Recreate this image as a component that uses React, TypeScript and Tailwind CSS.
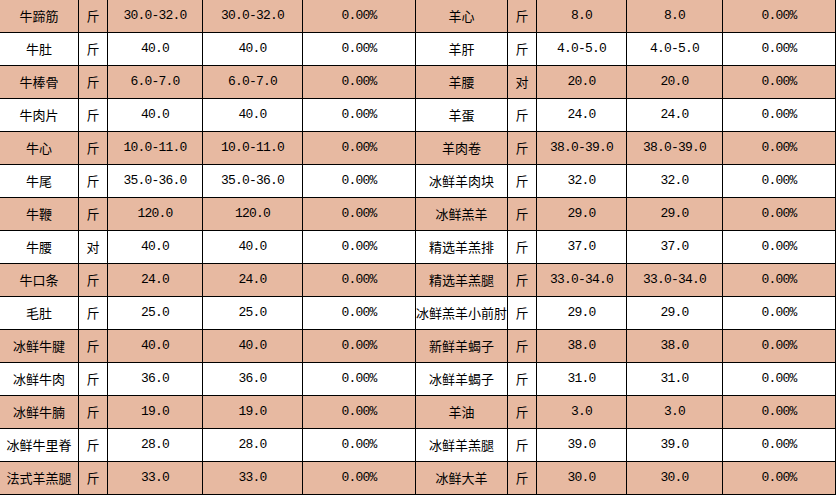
import React from "react";

type Row = [string, string, string];

const left: Row[] = [
  ["牛蹄筋", "斤", "30.0-32.0"],
  ["牛肚", "斤", "40.0"],
  ["牛棒骨", "斤", "6.0-7.0"],
  ["牛肉片", "斤", "40.0"],
  ["牛心", "斤", "10.0-11.0"],
  ["牛尾", "斤", "35.0-36.0"],
  ["牛鞭", "斤", "120.0"],
  ["牛腰", "对", "40.0"],
  ["牛口条", "斤", "24.0"],
  ["毛肚", "斤", "25.0"],
  ["冰鲜牛腱", "斤", "40.0"],
  ["冰鲜牛肉", "斤", "36.0"],
  ["冰鲜牛腩", "斤", "19.0"],
  ["冰鲜牛里脊", "斤", "28.0"],
  ["法式羊羔腿", "斤", "33.0"],
];

const right: Row[] = [
  ["羊心", "斤", "8.0"],
  ["羊肝", "斤", "4.0-5.0"],
  ["羊腰", "对", "20.0"],
  ["羊蛋", "斤", "24.0"],
  ["羊肉卷", "斤", "38.0-39.0"],
  ["冰鲜羊肉块", "斤", "32.0"],
  ["冰鲜羔羊", "斤", "29.0"],
  ["精选羊羔排", "斤", "37.0"],
  ["精选羊羔腿", "斤", "33.0-34.0"],
  ["冰鲜羔羊小前肘", "斤", "29.0"],
  ["新鲜羊蝎子", "斤", "38.0"],
  ["冰鲜羊蝎子", "斤", "31.0"],
  ["羊油", "斤", "3.0"],
  ["冰鲜羊羔腿", "斤", "39.0"],
  ["冰鲜大羊", "斤", "30.0"],
];

const cjk = "font-['Noto_Sans_CJK_SC',sans-serif] text-[13px]";
const mono = "font-['Liberation_Mono',monospace] text-[13px] tracking-[-0.8px]";
const cell =
  "h-[33px] border-r border-b border-black flex items-center justify-center whitespace-nowrap text-black";

export default function App() {
  return (
    <div className="w-[836px] h-[496px] bg-white overflow-hidden">
      <div className="grid grid-cols-[79px_29px_95px_100px_113px_92px_29px_90px_96px_113px]">
        {left.map((l, i) => {
          const r = right[i];
          const bg = i % 2 === 0 ? "bg-[#e7b9a1]" : "bg-white";
          return (
            <React.Fragment key={i}>
              <div className={`${cell} ${bg} ${cjk}`}>{l[0]}</div>
              <div className={`${cell} ${bg} ${cjk}`}>{l[1]}</div>
              <div className={`${cell} ${bg} ${mono}`}>{l[2]}</div>
              <div className={`${cell} ${bg} ${mono}`}>{l[2]}</div>
              <div className={`${cell} ${bg} ${mono}`}>0.00%</div>
              <div className={`${cell} ${bg} ${cjk}`}>{r[0]}</div>
              <div className={`${cell} ${bg} ${cjk}`}>{r[1]}</div>
              <div className={`${cell} ${bg} ${mono}`}>{r[2]}</div>
              <div className={`${cell} ${bg} ${mono}`}>{r[2]}</div>
              <div className={`${cell} ${bg} ${mono}`}>0.00%</div>
            </React.Fragment>
          );
        })}
      </div>
    </div>
  );
}
